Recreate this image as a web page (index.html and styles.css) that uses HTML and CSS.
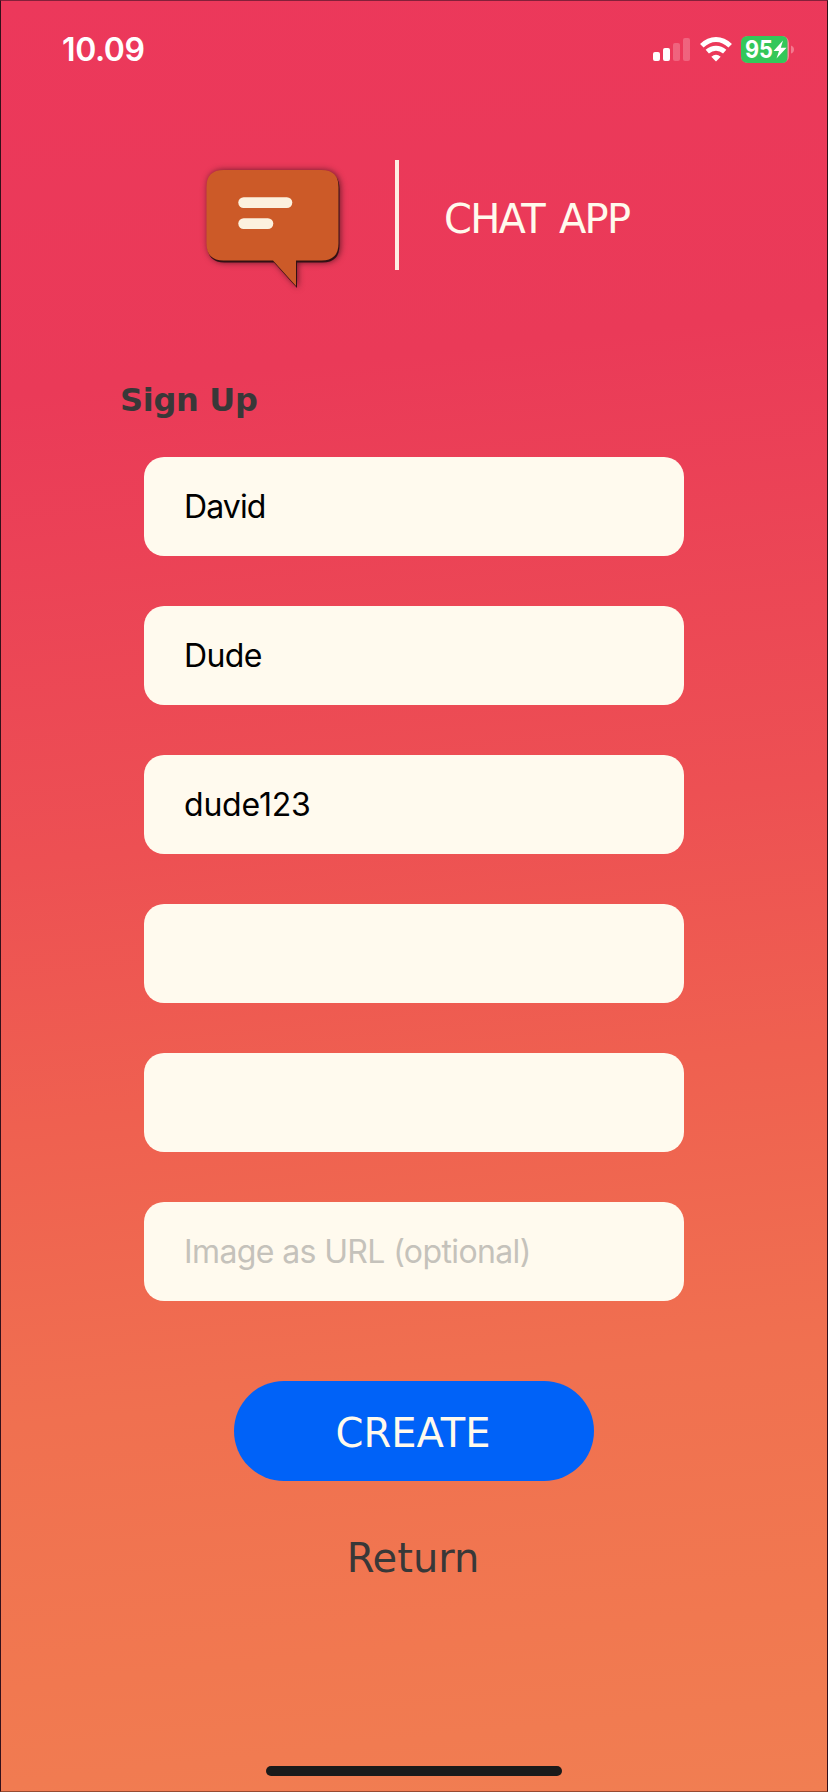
FILE: index.html
```html
<!DOCTYPE html>
<html lang="en">
<head>
<meta charset="utf-8">
<title>Chat App – Sign Up</title>
<link rel="stylesheet" href="styles.css">
</head>
<body>
<main class="screen">
  <header class="status">
    <span class="time">10.09</span>
    <div class="indicators">
      <svg class="signal" width="38" height="24" viewBox="0 0 38 24" fill="#fff">
        <rect x="0" y="14" width="7" height="9" rx="2"/>
        <rect x="10" y="10" width="7" height="13" rx="2"/>
        <rect x="20" y="5" width="7" height="18" rx="2" opacity=".22"/>
        <rect x="30" y="0" width="7" height="23" rx="2" opacity=".22"/>
      </svg>
      <svg class="wifi" width="32" height="25" viewBox="0 0 32 25" fill="none" stroke="#fff" stroke-width="5">
        <path d="M1.800 8.800Q8.200 2.500 16 2.500T30.200 8.800"/>
        <path d="M7.300 14.700Q11.200 11.300 16 11.300T24.700 14.700"/>
        <path d="M11.300 19.700Q16 16 20.700 19.700L16 24.400Z" fill="#fff" stroke="none"/>
      </svg>
      <svg class="battery" width="53" height="27" viewBox="0 0 53 27">
        <rect width="48" height="27" rx="7" fill="#f9829a"/>
        <path d="M7 0H41Q46.500 0 46.500 6V21Q46.500 27 41 27H7Q0 27 0 20V7Q0 0 7 0Z" fill="#34c759"/>
        <path d="M50 9.500Q53 10.500 53 13.500T50 17.500Z" fill="#f3798f"/>
        <text class="charge" x="4" y="22" textLength="28" lengthAdjust="spacingAndGlyphs">95</text>
        <path d="M42 4.500L32.500 15H38L35.500 22.500L45.500 11.700H39.800Z" fill="#fff"/>
      </svg>
    </div>
  </header>
  <div class="brand">
    <svg class="bubble" width="134" height="120" viewBox="0 0 134 120">
      <path d="M17.500 1H115.500Q132.500 1 132.500 18V74.500Q132.500 91.500 115.500 91.500H90V117L67 91.500H17.500Q.5 91.500 .5 74.500V18Q.5 1 17.500 1Z" fill="#cc5a28"/>
      <rect x="32.300" y="28.200" width="54" height="10.800" rx="5.400" fill="#fcf1de"/>
      <rect x="32.300" y="49.200" width="35" height="10.800" rx="5.400" fill="#fcf1de"/>
    </svg>
    <div class="divider"></div>
    <span class="name">CHAT APP</span>
  </div>
  <h1 class="title">Sign Up</h1>
  <form class="form">
    <div class="field first">David</div>
    <div class="field last">Dude</div>
    <div class="field user">dude123</div>
    <div class="field"></div>
    <div class="field"></div>
    <div class="field hint">Image as URL (optional)</div>
    <button class="create" type="button">CREATE</button>
    <a class="return">Return</a>
  </form>
  <div class="home"></div>
</main>
</body>
</html>
```
FILE: styles.css
```css
body { margin: 0; }
.screen {
  box-sizing: border-box;
  width: 828px;
  height: 1792px;
  display: flex;
  flex-direction: column;
  border: 1px solid #33101a;
  border-top-color: #84203a;
  border-bottom-color: #984a30;
  background: linear-gradient(174deg, #ec385b 0%, #ea3a58 21%, #ed5053 46%, #ef6050 60%, #f07050 76%, #f17850 90%, #f17e52 100%);
}
.status {
  display: flex;
  justify-content: space-between;
  height: 27px;
  padding: 35px 33px 0 61px;
}
.time { font: 600 32px/28px Inter, sans-serif; color: #fff; letter-spacing: -.4px; }
.indicators { display: flex; align-items: flex-start; }
.signal { margin: 2px 9px 0 0; }
.wifi { margin: 1px 9px 0 0; }
.charge { font: 700 24px Inter, sans-serif; fill: #fff; }
.brand { display: flex; align-items: flex-start; margin: 97px 0 0 205px; height: 120px; }
.bubble { margin-top: 9px; overflow: visible; filter: drop-shadow(1.500px 2px .5px #321014) drop-shadow(1px 0 3px rgba(40, 10, 15, .65)); }
.divider { width: 4px; height: 110px; margin-left: 55px; background: #feeee3; }
.name { margin: 34px 0 0 45px; font: 40px/50px "DejaVu Sans", sans-serif; letter-spacing: -1.700px; word-spacing: 4px; color: #fffaed; white-space: nowrap; }
.title { margin: 98px 0 0 119px; font: 700 32px/44px "DejaVu Sans", sans-serif; letter-spacing: -.3px; color: #383838; }
.form { display: flex; flex-direction: column; margin: 35px 0 0 143px; width: 540px; }
.field {
  box-sizing: border-box;
  height: 99px;
  margin-bottom: 50px;
  padding-left: 40px;
  border-radius: 20px;
  background: #fffaee;
  font: 32px/99px Inter, sans-serif;
  color: #000;
}
.first { letter-spacing: -.9px; }
.last { letter-spacing: -.6px; }
.user { letter-spacing: -.2px; }
.hint { color: #c5c2bb; letter-spacing: -.62px; }
.create {
  width: 360px;
  height: 100px;
  margin: 30px auto 0;
  padding: 4px 2px 0 0;
  border: 0;
  border-radius: 50px;
  background: #0062f8;
  color: #fffaed;
  font: 40px/96px "DejaVu Sans", sans-serif;
}
.return { margin: 52px 2px 0 0; text-align: center; font: 40px/50px "DejaVu Sans", sans-serif; color: #383838; }
.home { width: 296px; height: 10px; margin: auto auto 15px; border-radius: 5px; background: #1a1a1a; }
```
